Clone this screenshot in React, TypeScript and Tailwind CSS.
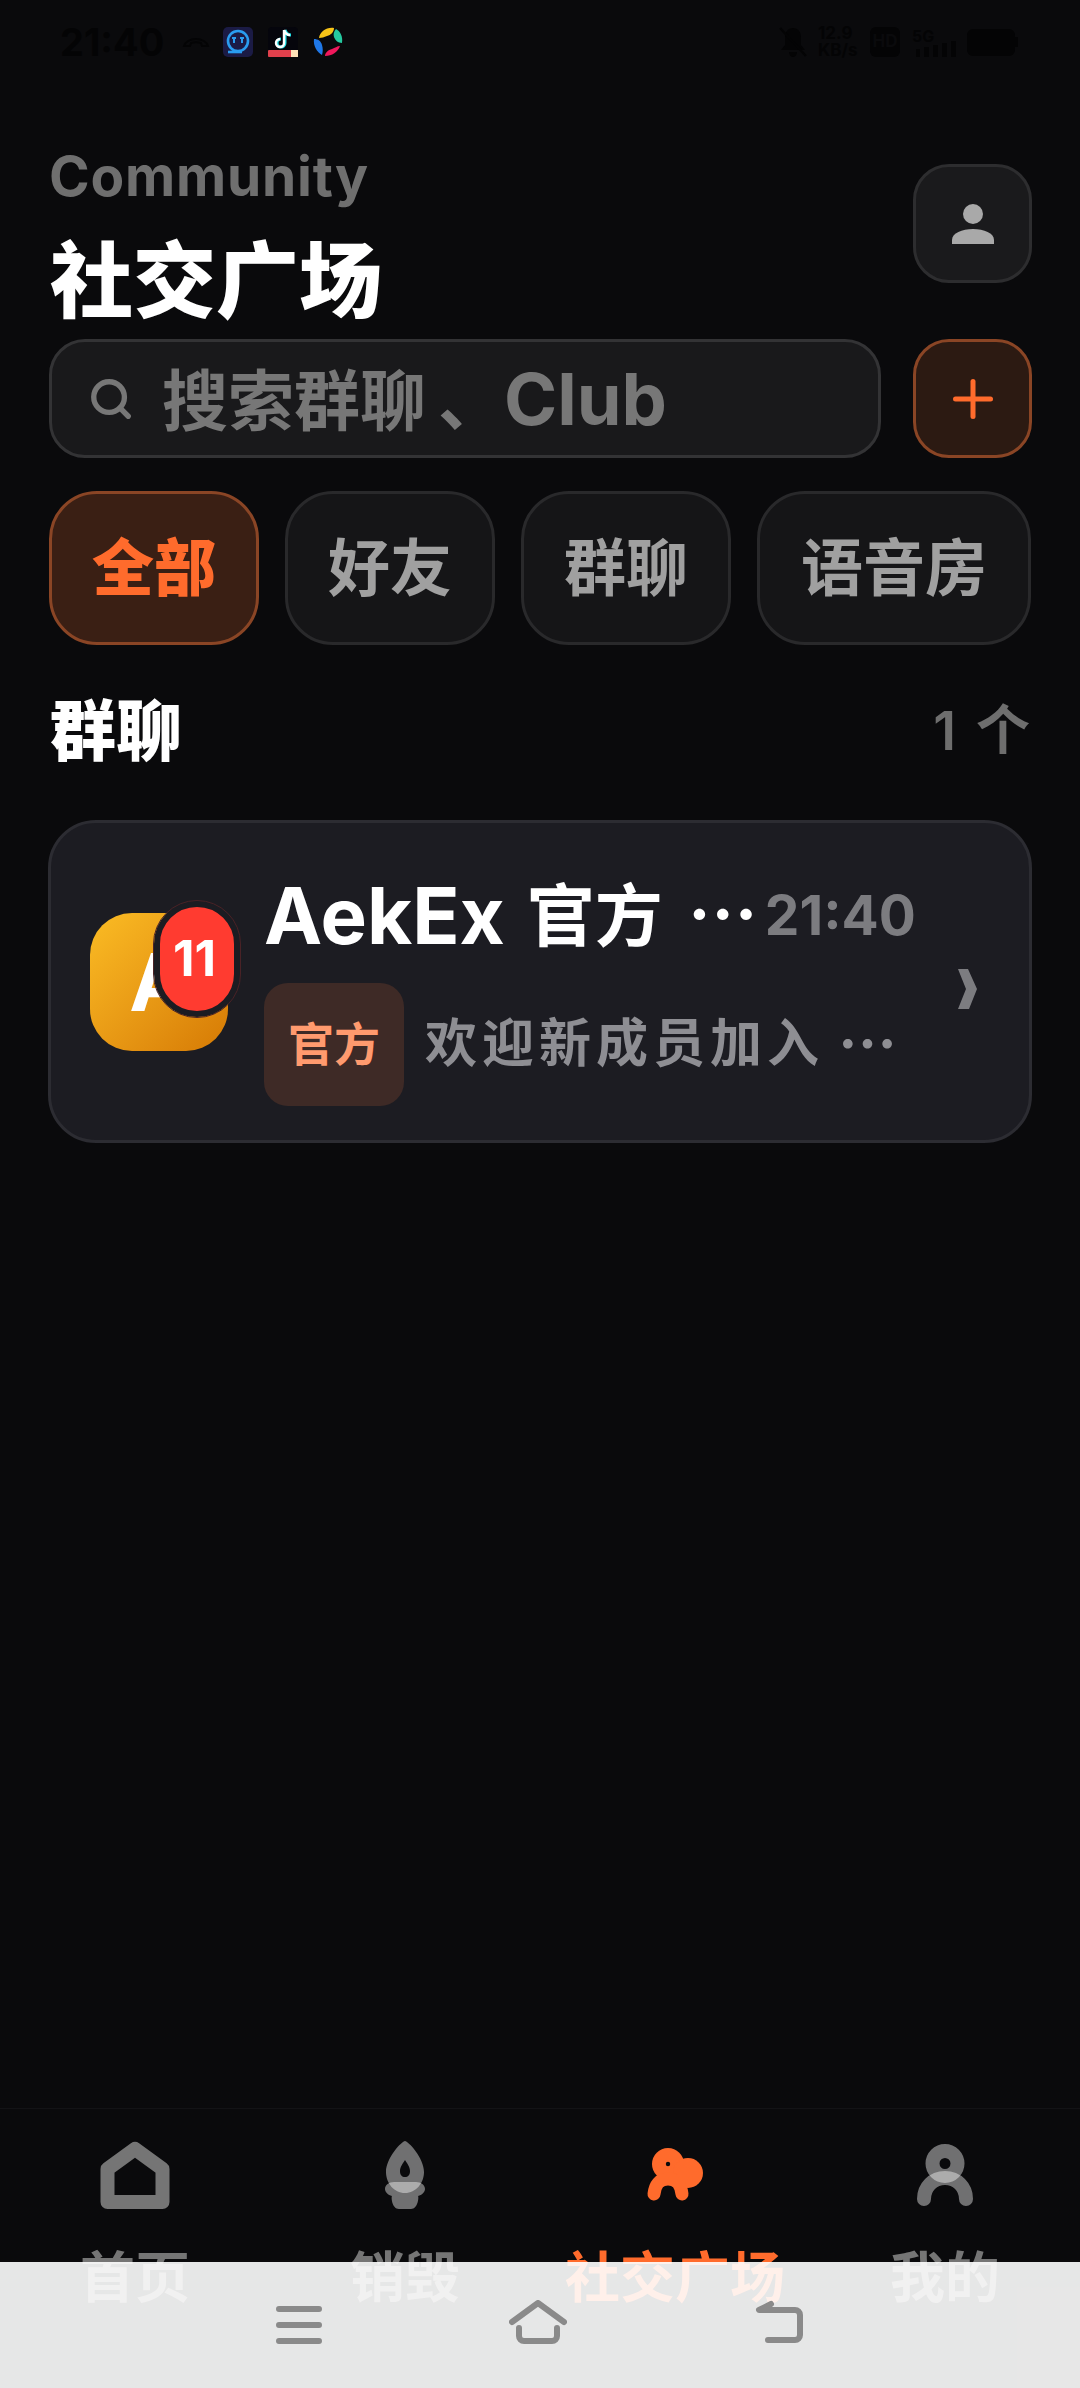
import { Search, Plus } from "lucide-react";

const font = "font-['Inter','Noto_Sans_CJK_SC',sans-serif]";

function StatusBar() {
  return (
    <div className="flex h-[84px] items-center justify-between pl-[60px] pr-[62px] text-[#040405]">
      <div className="flex items-center">
        <span className="w-[104px] text-[38px] font-bold leading-none">21:40</span>
        <svg viewBox="0 0 28 14" className="ml-[18px] h-[14px] w-[28px]" fill="none" stroke="#040405" strokeWidth="2">
          <path d="M2 11c1-4 6-7 12-7s11 3 12 7l-6 0-1-3c-3-1-7-1-10 0l-1 3z" />
        </svg>
        <svg viewBox="0 0 30 30" className="ml-[13px] h-[30px] w-[30px]">
          <rect width="30" height="30" rx="5" fill="#1b1b45" />
          <circle cx="15" cy="14" r="10" fill="none" stroke="#2a9df0" strokeWidth="2.6" />
          <path d="M9 11h4M17 11h4M11 11v5M19 11v5" stroke="#2a9df0" strokeWidth="2" />
          <path d="M5 25h14" stroke="#2a9df0" strokeWidth="2.6" />
        </svg>
        <svg viewBox="0 0 30 30" className="ml-[15px] h-[30px] w-[30px]">
          <rect width="30" height="30" fill="#05050c" rx="4" />
          <path d="M17 3v13a4 4 0 1 1-4-4M17 3c1 3 3 5 6 5" fill="none" stroke="#25e0e8" strokeWidth="3" />
          <path d="M16 3v13a4 4 0 1 1-4-4M16 3c1 3 3 5 6 5" fill="none" stroke="#ffffff" strokeWidth="2.4" />
          <rect y="23" width="30" height="7" rx="1" fill="#e0404c" />
          <rect x="23" y="23" width="7" height="7" fill="#ffe2b8" />
        </svg>
        <svg viewBox="0 0 30 30" className="ml-[15px] h-[30px] w-[30px]">
          <path d="M6 11C7 5 13 0 21 1c0 4-3 7-7 8-3 1-5 2-8 2z" fill="#f7c418" />
          <path d="M23 2c4 2 7 7 6 14-4 0-7-3-8-6-1-3 0-6 2-8z" fill="#25c9a0" />
          <path d="M27 19c-2 6-8 10-15 10 0-3 3-6 7-7 3-1 5-3 8-3z" fill="#f0185c" />
          <path d="M9 28C4 25 0 19 1 12c4 0 7 2 8 6 1 3 1 7 0 10z" fill="#1f78e8" />
        </svg>
      </div>
      <div className="flex items-center">
        <svg viewBox="0 0 28 30" className="h-[30px] w-[28px]" fill="#040405">
          <path d="M14 1c5 0 8 4 8 9v8l4 5H2l4-5v-8c0-5 3-9 8-9zM10 25h8c0 3-2 5-4 5s-4-2-4-5z" />
          <path d="M1 1l26 28" stroke="#040405" strokeWidth="2.5" />
        </svg>
        <div className="ml-[11px] flex w-[42px] flex-col text-[17px] font-bold leading-[17px]">
          <span>12.9</span>
          <span>KB/s</span>
        </div>
        <div className="ml-[10px] flex h-[30px] w-[30px] items-center justify-center rounded-[6px] bg-[#040405] text-[17px] font-bold text-[#0a0a0c]">
          HD
        </div>
        <div className="relative ml-[12px] h-[30px] w-[44px]">
          <span className="absolute left-0 top-[-3px] text-[16px] font-bold">5G</span>
          <div className="absolute bottom-0 right-0 flex items-end gap-[4px]">
            <div className="h-[8px] w-[4px] bg-[#040405]" />
            <div className="h-[10px] w-[5px] bg-[#040405]" />
            <div className="h-[12px] w-[5px] bg-[#040405]" />
            <div className="h-[14px] w-[5px] bg-[#040405]" />
            <div className="h-[16px] w-[5px] bg-[#040405]" />
          </div>
        </div>
        <div className="ml-[11px] h-[27px] w-[48px] rounded-[6px] bg-[#040405]" />
        <div className="h-[10px] w-[3px] bg-[#040405]" />
      </div>
    </div>
  );
}

function Header() {
  return (
    <div className="mt-[64px] flex items-start justify-between pl-[49px] pr-[48px]">
      <div>
        <p className="-mt-[2px] text-[55px] font-bold leading-[60px] tracking-[0.8px] text-[#6f6f6f]">Community</p>
        <h1 className="ml-[1px] mt-[25px] text-[83px] font-black leading-[100px] text-white">社交广场</h1>
      </div>
      <button className="mt-[16px] flex h-[119px] w-[119px] items-center justify-center rounded-[36px] border-[3px] border-[#2d2d2f] bg-[#1a1a1c]">
        <svg viewBox="0 0 42 40" className="h-[40px] w-[42px]" fill="#a9a9a9">
          <ellipse cx="21" cy="10" rx="10" ry="10" />
          <path d="M0 40v-4c0-7 10-11 21-11s21 4 21 11v4z" />
        </svg>
      </button>
    </div>
  );
}

function SearchRow() {
  return (
    <div className="mt-[8px] flex gap-[32px] pl-[49px] pr-[48px]">
      <div className="flex h-[119px] flex-1 items-center rounded-[36px] border-[3px] border-[#333335] bg-[#19191b] pl-[36px]">
        <Search size={46} strokeWidth={2.8} className="text-[#777777]" />
        <span className="ml-[28px] whitespace-nowrap text-[66px] font-bold leading-none text-[#777777]">
          搜索群聊
          <span className="ml-[12px]">、</span>
          <span className="text-[72px]">Club</span>
        </span>
      </div>
      <button className="flex h-[119px] w-[119px] items-center justify-center rounded-[36px] border-[3px] border-[#8a4525] bg-[#2c1a12]">
        <Plus size={60} strokeWidth={2} className="text-[#ff6b2c]" />
      </button>
    </div>
  );
}

function Chips() {
  const chips = ["好友", "群聊", "语音房"];
  return (
    <div className="mt-[33px] flex gap-[26px] pl-[49px] pr-[49px]">
      <div className="flex h-[154px] w-[210px] items-center justify-center rounded-[48px] border-[3px] border-[#8a4525] bg-[#3a1f14] text-[62px] font-black text-[#ff6b2c]">
        全部
      </div>
      {chips.map((c) => (
        <div
          key={c}
          className={`flex h-[154px] items-center justify-center rounded-[48px] border-[3px] border-[#29292b] bg-[#151517] text-[62px] font-bold text-[#a0a0a0] ${c === "语音房" ? "flex-1" : "w-[210px]"}`}
        >
          {c}
        </div>
      ))}
    </div>
  );
}

function GroupCard() {
  return (
    <div className="mx-[48px] mt-[49px] flex h-[323px] items-center rounded-[48px] border-[3px] border-[#2c2c32] bg-[#1c1c22] pl-[39px]">
      <div className="relative h-[138px] w-[138px] shrink-0">
        <div className="flex h-full w-full items-center justify-center rounded-[42px] bg-gradient-to-br from-[#fbbc24] to-[#d67a04] text-[80px] font-bold text-white">
          A
        </div>
        <div className="absolute left-[64px] top-[-12px] flex h-[116px] w-[86px] items-center justify-center rounded-[43px] border-[6px] border-[#1c1c22] bg-[#ff3b30] pr-[5px] text-[50px] font-bold text-white outline outline-1 outline-[#4a2226]">
          11
        </div>
      </div>
      <div className="ml-[36px] w-[650px] shrink-0 whitespace-nowrap pt-[8px]">
        <div className="flex items-center">
          <span className="text-[78px] font-bold leading-[100px] text-white">AekEx</span>
          <span className="ml-[22px] text-[68px] font-bold leading-[100px] text-white">官方</span>
          <span className="ml-[25px] text-[70px] font-bold leading-none text-white">⋯</span>
          <span className="ml-[7px] text-[55px] font-bold leading-none text-[#7c7c80]">21:40</span>
        </div>
        <div className="mt-[17px] flex items-center">
          <div className="flex h-[123px] w-[140px] items-center justify-center rounded-[24px] bg-[#3e2a26] text-[46px] font-bold text-[#ff9a6e]">
            官方
          </div>
          <span className="ml-[21px] text-[52px] font-bold tracking-[5px] text-[#8e8e93]">欢迎新成员加入</span>
          <span className="ml-[14px] text-[59px] font-bold leading-none text-[#8e8e93]">⋯</span>
        </div>
      </div>
      <svg viewBox="0 0 20 40" className="ml-[44px] mt-[14px] h-[40px] w-[20px]" fill="#7c7c80">
        <path d="M0 0h10l9 20-8 20H0l8-20z" />
      </svg>
    </div>
  );
}

function HomeIcon() {
  return (
    <svg viewBox="0 0 70 68" className="h-[68px] w-[70px]" fill="none">
      <path d="M7.500 28 35 8l27.500 20v33h-55z" stroke="#757575" strokeWidth="14" strokeLinejoin="round" />
    </svg>
  );
}

function FlameIcon() {
  return (
    <svg viewBox="0 0 40 68" className="h-[68px] w-[40px]">
      <path
        fillRule="evenodd"
        d="M20 0c3 0 19 17 19 31 0 11-8 21-19 21S1 42 1 31C1 17 17 0 20 0zm0 19c-2 3-5 7-5 11s2 6 5 6 5-2 5-6-3-8-5-11z"
        fill="#fff"
        fillOpacity="0.42"
      />
      <path
        d="M9 41h22c5 0 9 3 9 7 0 3-3 6-7 7 1 1 0 13-7 13H14c-7 0-8-12-7-13-4-1-7-4-7-7 0-4 4-7 9-7z"
        fill="#fff"
        fillOpacity="0.42"
      />
    </svg>
  );
}

function SocialIcon() {
  return (
    <svg viewBox="0 0 58 54" className="h-[54px] w-[58px]" fill="#ff6b2c">
      <circle cx="22" cy="16" r="16" />
      <circle cx="42" cy="25" r="15" />
      <path d="M8 46c1-9 5-15 14-15s13 6 14 15" fill="none" stroke="#ff6b2c" strokeWidth="13" strokeLinecap="round" />
      <circle cx="22" cy="16" r="2.200" fill="#0a0a0c" />
    </svg>
  );
}

function PersonIcon() {
  return (
    <svg viewBox="0 0 56 62" className="h-[62px] w-[56px]" fill="none">
      <path
        fillRule="evenodd"
        d="M28 0a19.500 19.500 0 1 1 0 39 19.500 19.500 0 0 1 0-39zm0 14a5.500 5.500 0 1 0 0 11 5.500 5.500 0 0 0 0-11z"
        fill="#fff"
        fillOpacity="0.42"
      />
      <path d="M7 55c0-12 9-21 21-21s21 9 21 21" stroke="#fff" strokeOpacity="0.42" strokeWidth="14" strokeLinecap="round" />
    </svg>
  );
}

function TabBar() {
  const tabs = [
    { label: "首页", icon: <HomeIcon />, color: "text-[#757575]" },
    { label: "销毁", icon: <FlameIcon />, color: "text-[#757575]" },
    { label: "社交广场", icon: <SocialIcon />, color: "text-[#ff6b2c]" },
    { label: "我的", icon: <PersonIcon />, color: "text-[#757575]" },
  ];
  return (
    <div className="mt-auto grid h-[280px] grid-cols-4 border-t border-[#131316] pt-[32px]">
      {tabs.map((t) => (
        <div key={t.label} className="flex flex-col items-center">
          <div className="flex h-[68px] items-center justify-center">{t.icon}</div>
          <span className={`mt-[38px] text-[55px] font-bold leading-[60px] ${t.color}`}>{t.label}</span>
        </div>
      ))}
    </div>
  );
}

function NavOverlay() {
  return (
    <div className="absolute inset-x-0 bottom-0 h-[126px] bg-white/90">
      <div className="flex h-[82px] items-end justify-center gap-[187px]">
        <svg viewBox="0 0 46 38" className="h-[38px] w-[46px]" stroke="#8a8a8a" strokeWidth="6" strokeLinecap="round">
          <path d="M3 3h40M3 19h40M3 35h40" />
        </svg>
        <svg viewBox="0 0 58 44" className="h-[44px] w-[58px]" fill="none" stroke="#8a8a8a" strokeWidth="6" strokeLinecap="round" strokeLinejoin="round">
          <path d="M3 22 29 3l26 19M10 28v8a5 5 0 0 0 5 5h28a5 5 0 0 0 5-5v-8" />
        </svg>
        <svg viewBox="0 0 50 44" className="h-[44px] w-[50px]" fill="none" stroke="#8a8a8a" strokeWidth="6" strokeLinecap="round" strokeLinejoin="round">
          <path d="M17 4 5 10h36a5 5 0 0 1 5 5v20a5 5 0 0 1-5 5H14" />
        </svg>
      </div>
    </div>
  );
}

export default function App() {
  return (
    <div className={`relative flex h-[2388px] w-[1080px] flex-col overflow-hidden bg-[#0a0a0c] ${font}`}>
      <StatusBar />
      <Header />
      <SearchRow />
      <Chips />
      <div className="mt-[46px] flex items-center justify-between pl-[50px] pr-[50px]">
        <h2 className="text-[66px] font-black leading-[80px] text-white">群聊</h2>
        <span className="flex items-center gap-[20px] text-[54px] font-semibold leading-none text-[#6e6e6e]">
          <span>1</span>
          <span>个</span>
        </span>
      </div>
      <GroupCard />
      <TabBar />
      <NavOverlay />
    </div>
  );
}
